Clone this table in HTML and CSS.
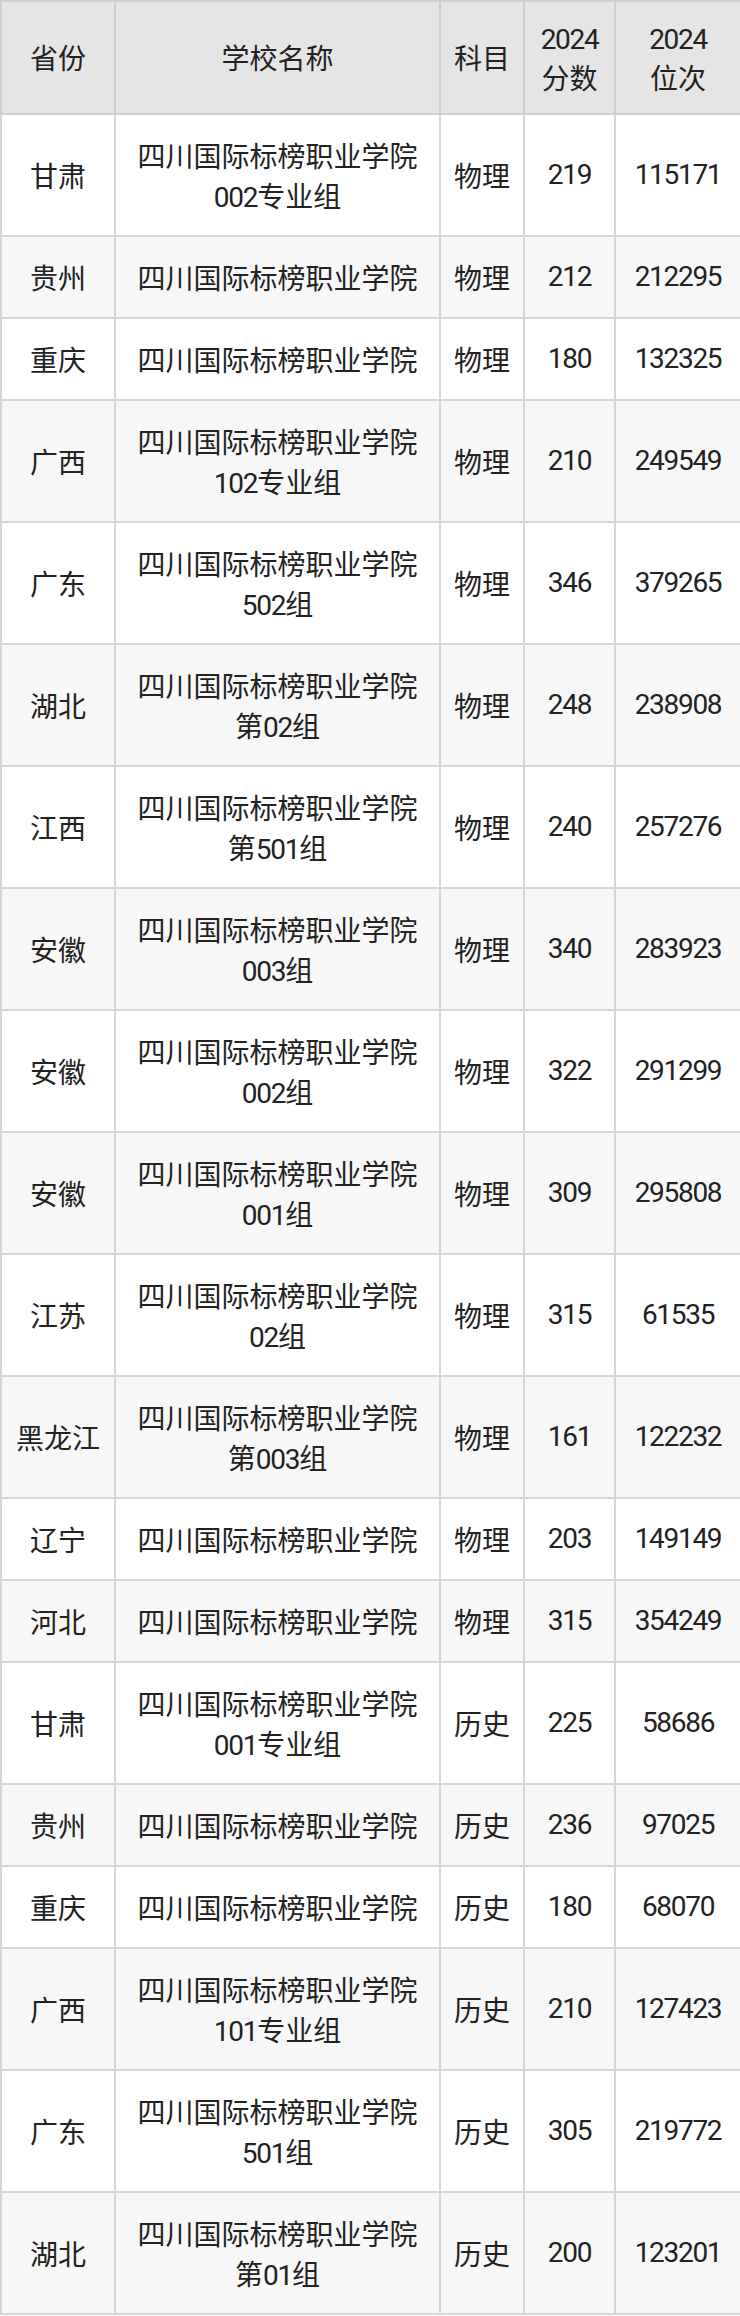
FILE: index.html
```html
<!DOCTYPE html>
<html lang="zh-CN">
<head>
<meta charset="utf-8">
<link rel="stylesheet" href="styles.css">
</head>
<body>
<table class="score-table">
  <colgroup>
    <col class="c-prov"><col class="c-school"><col class="c-subj"><col class="c-score"><col class="c-rank">
  </colgroup>
  <thead>
    <tr><th>省份</th><th>学校名称</th><th>科目</th><th><span class="num">2024</span><br>分数</th><th><span class="num">2024</span><br>位次</th></tr>
  </thead>
  <tbody>
    <tr><td>甘肃</td><td>四川国际标榜职业学院<br><span class="num">002</span>专业组</td><td>物理</td><td class="num">219</td><td class="num">115171</td></tr>
    <tr><td>贵州</td><td>四川国际标榜职业学院</td><td>物理</td><td class="num">212</td><td class="num">212295</td></tr>
    <tr><td>重庆</td><td>四川国际标榜职业学院</td><td>物理</td><td class="num">180</td><td class="num">132325</td></tr>
    <tr><td>广西</td><td>四川国际标榜职业学院<br><span class="num">102</span>专业组</td><td>物理</td><td class="num">210</td><td class="num">249549</td></tr>
    <tr><td>广东</td><td>四川国际标榜职业学院<br><span class="num">502</span>组</td><td>物理</td><td class="num">346</td><td class="num">379265</td></tr>
    <tr><td>湖北</td><td>四川国际标榜职业学院<br>第<span class="num">02</span>组</td><td>物理</td><td class="num">248</td><td class="num">238908</td></tr>
    <tr><td>江西</td><td>四川国际标榜职业学院<br>第<span class="num">501</span>组</td><td>物理</td><td class="num">240</td><td class="num">257276</td></tr>
    <tr><td>安徽</td><td>四川国际标榜职业学院<br><span class="num">003</span>组</td><td>物理</td><td class="num">340</td><td class="num">283923</td></tr>
    <tr><td>安徽</td><td>四川国际标榜职业学院<br><span class="num">002</span>组</td><td>物理</td><td class="num">322</td><td class="num">291299</td></tr>
    <tr><td>安徽</td><td>四川国际标榜职业学院<br><span class="num">001</span>组</td><td>物理</td><td class="num">309</td><td class="num">295808</td></tr>
    <tr><td>江苏</td><td>四川国际标榜职业学院<br><span class="num">02</span>组</td><td>物理</td><td class="num">315</td><td class="num">61535</td></tr>
    <tr><td>黑龙江</td><td>四川国际标榜职业学院<br>第<span class="num">003</span>组</td><td>物理</td><td class="num">161</td><td class="num">122232</td></tr>
    <tr><td>辽宁</td><td>四川国际标榜职业学院</td><td>物理</td><td class="num">203</td><td class="num">149149</td></tr>
    <tr><td>河北</td><td>四川国际标榜职业学院</td><td>物理</td><td class="num">315</td><td class="num">354249</td></tr>
    <tr><td>甘肃</td><td>四川国际标榜职业学院<br><span class="num">001</span>专业组</td><td>历史</td><td class="num">225</td><td class="num">58686</td></tr>
    <tr><td>贵州</td><td>四川国际标榜职业学院</td><td>历史</td><td class="num">236</td><td class="num">97025</td></tr>
    <tr><td>重庆</td><td>四川国际标榜职业学院</td><td>历史</td><td class="num">180</td><td class="num">68070</td></tr>
    <tr><td>广西</td><td>四川国际标榜职业学院<br><span class="num">101</span>专业组</td><td>历史</td><td class="num">210</td><td class="num">127423</td></tr>
    <tr><td>广东</td><td>四川国际标榜职业学院<br><span class="num">501</span>组</td><td>历史</td><td class="num">305</td><td class="num">219772</td></tr>
    <tr><td>湖北</td><td>四川国际标榜职业学院<br>第<span class="num">01</span>组</td><td>历史</td><td class="num">200</td><td class="num">123201</td></tr>
  </tbody>
</table>
</body>
</html>
```
FILE: styles.css
```css
html, body {
  margin: 0;
  padding: 0;
  background: #ffffff;
}
.score-table {
  width: 740px;
  border-collapse: collapse;
  table-layout: fixed;
  font-family: "Noto Sans CJK SC", "Noto Sans", sans-serif;
  font-size: 28px;
  line-height: 40px;
  color: #222222;
}
.c-prov { width: 114px; }
.c-school { width: 325px; }
.c-subj { width: 84px; }
.c-score { width: 91px; }
.c-rank { width: 126px; }
.score-table th,
.score-table td {
  border: 2px solid #d6d6d6;
  text-align: center;
  vertical-align: middle;
  padding: 20px 0;
  font-weight: normal;
  white-space: nowrap;
}
.score-table th {
  background: #e5e5e5;
  padding: 15px 0 16px;
  border-color: #cfcfcf;
}
.score-table tbody tr:nth-child(even) td {
  background: #f7f7f7;
}
.num {
  font-family: Roboto, "Liberation Sans", sans-serif;
  letter-spacing: -1.3px;
}
span.num {
  line-height: 1;
}
```
